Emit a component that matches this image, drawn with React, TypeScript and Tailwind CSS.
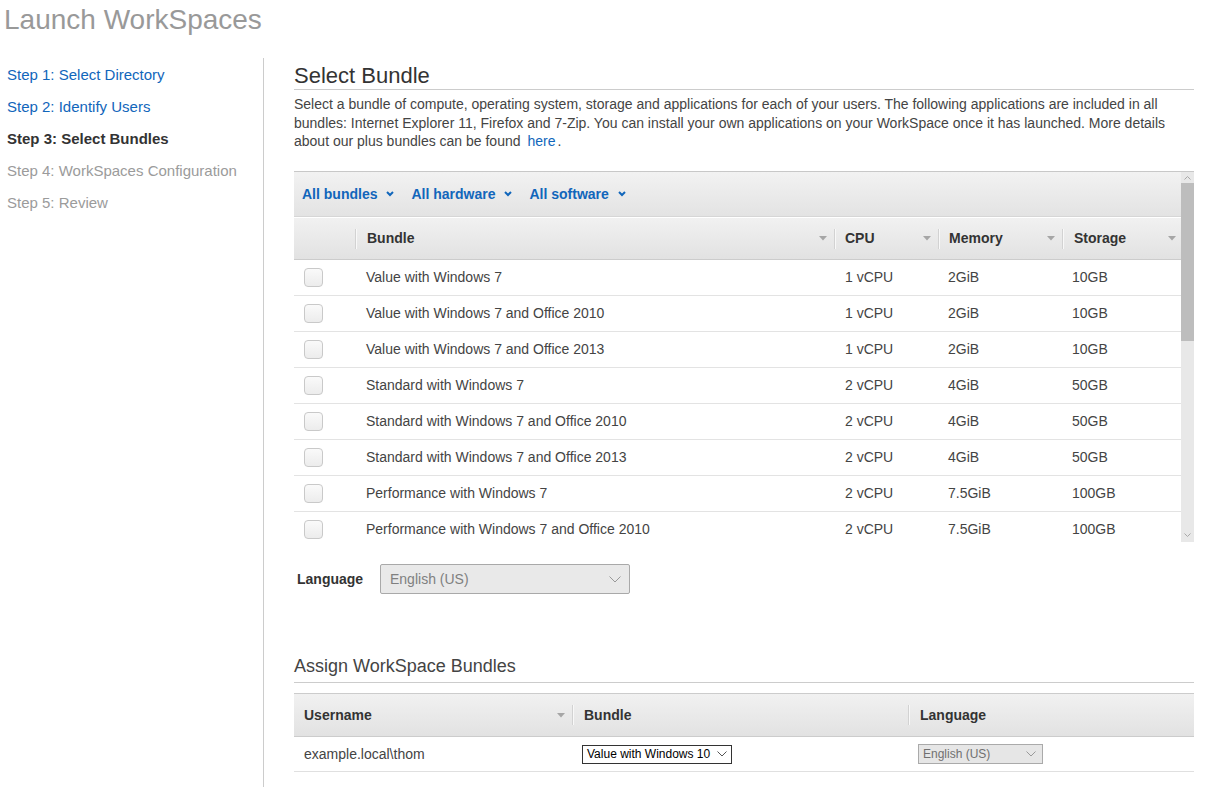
import React from "react"

const bundles = [
    { name: "Value with Windows 7", cpu: "1 vCPU", mem: "2GiB", storage: "10GB" },
    { name: "Value with Windows 7 and Office 2010", cpu: "1 vCPU", mem: "2GiB", storage: "10GB" },
    { name: "Value with Windows 7 and Office 2013", cpu: "1 vCPU", mem: "2GiB", storage: "10GB" },
    { name: "Standard with Windows 7", cpu: "2 vCPU", mem: "4GiB", storage: "50GB" },
    { name: "Standard with Windows 7 and Office 2010", cpu: "2 vCPU", mem: "4GiB", storage: "50GB" },
    { name: "Standard with Windows 7 and Office 2013", cpu: "2 vCPU", mem: "4GiB", storage: "50GB" },
    { name: "Performance with Windows 7", cpu: "2 vCPU", mem: "7.5GiB", storage: "100GB" },
    { name: "Performance with Windows 7 and Office 2010", cpu: "2 vCPU", mem: "7.5GiB", storage: "100GB" },
]

function Caret({ className = "" }: { className?: string }) {
    return (
        <svg className={className} width="8" height="5" viewBox="0 0 8 5">
            <polygon points="0,0 8,0 4,4.5" fill="#a6a6a6" />
        </svg>
    )
}

function BlueChevron() {
    return (
        <svg className="ml-[9px] mr-[17px]" width="8" height="6" viewBox="0 0 8 6">
            <polyline points="1,1 4,4 7,1" fill="none" stroke="#1166bb" strokeWidth="2" />
        </svg>
    )
}

function ThinChevron({ className = "", w = 12, h = 7, color = "#999" }: { className?: string, w?: number, h?: number, color?: string }) {
    return (
        <svg className={className} width={w} height={h} viewBox={`0 0 ${w} ${h}`}>
            <polyline points={`0.5,0.5 ${w / 2},${h - 1} ${w - 0.5},0.5`} fill="none" stroke={color} strokeWidth="1" />
        </svg>
    )
}

function Sep() {
    return <div className="h-[20px] w-px bg-[#d2d2d2] border-r border-[#f8f8f8] box-content" />
}

export default function App() {
    return (
        <div className="w-[1205px] h-[787px] overflow-hidden bg-white font-['Liberation_Sans',Arial,sans-serif]">
            <h1 className="pl-[4px] pt-[4px] text-[28px] leading-[32px] text-[#999]">Launch WorkSpaces</h1>

            <div className="mt-[22px] flex h-[729px]">
                {/* steps */}
                <div className="w-[264px] shrink-0 border-r border-[#cccccc] pt-[1px] pl-[7px] text-[15px] leading-[32px]">
                    <div className="text-[#1166bb]">Step 1: Select Directory</div>
                    <div className="text-[#1166bb]">Step 2: Identify Users</div>
                    <div className="font-bold text-[#333]">Step 3: Select Bundles</div>
                    <div className="text-[#9b9b9b]">Step 4: WorkSpaces Configuration</div>
                    <div className="text-[#9b9b9b]">Step 5: Review</div>
                </div>

                <div className="pl-[30px] w-[930px]">
                    <h2 className="mt-[4px] text-[22px] leading-[27px] text-[#333] border-b border-[#cccccc]">Select Bundle</h2>
                    <p className="mt-[5px] text-[14px] leading-[18.5px] text-[#444]">
                        Select a bundle of compute, operating system, storage and applications for each of your users. The following applications are included in all bundles: Internet Explorer 11, Firefox and 7-Zip. You can install your own applications on your WorkSpace once it has launched. More details about our plus bundles can be found <a className="ml-[3px] mr-[2px] text-[#1166bb]">here</a>.
                    </p>

                    {/* bundle table */}
                    <div className="mt-[20.5px] border-t border-[#c8c8c8] flex h-[371px]">
                        <div className="w-[887px] overflow-hidden text-[14px]">
                            <div className="h-[45px] flex items-center pl-[8px] bg-linear-to-b from-[#f2f2f2] to-[#e3e3e3] border-b border-[#d6d6d6] font-bold text-[#1166bb]">
                                <span>All bundles</span><BlueChevron />
                                <span>All hardware</span><BlueChevron />
                                <span>All software</span><BlueChevron />
                            </div>
                            <div className="h-[43px] flex items-stretch bg-linear-to-b from-[#f1f1f1] to-[#e2e2e2] border-t border-white border-b border-b-[#cccccc] font-bold text-[#333]">
                                <div className="w-[61px]" />
                                <div className="w-[479px] flex items-center"><Sep /><span className="ml-[10px]">Bundle</span><Caret className="ml-auto mr-[7px]" /></div>
                                <div className="w-[104px] flex items-center"><Sep /><span className="ml-[9px]">CPU</span><Caret className="ml-auto mr-[7px]" /></div>
                                <div className="w-[124px] flex items-center"><Sep /><span className="ml-[9px]">Memory</span><Caret className="ml-auto mr-[7px]" /></div>
                                <div className="w-[119px] flex items-center"><Sep /><span className="ml-[10px]">Storage</span><Caret className="ml-auto mr-[5px]" /></div>
                            </div>
                            {bundles.map((b) => (
                                <div key={b.name} className="h-[36px] shrink-0 flex items-center border-b border-[#e3e3e3] text-[#444]">
                                    <div className="w-[61px] pl-[10px]">
                                        <div className="w-[19px] h-[19px] rounded-[4px] border border-[#c9c9c9] bg-linear-to-b from-[#fafafa] to-[#ececec]" />
                                    </div>
                                    <div className="w-[479px] pl-[11px]">{b.name}</div>
                                    <div className="w-[104px] pl-[11px]">{b.cpu}</div>
                                    <div className="w-[124px] pl-[10px]">{b.mem}</div>
                                    <div className="w-[119px] pl-[10px]">{b.storage}</div>
                                </div>
                            ))}
                        </div>
                        <div className="w-[13px] bg-[#e8e8e8] flex flex-col items-center">
                            <div className="h-[11px] flex items-center justify-center">
                                <svg width="7" height="4" viewBox="0 0 7 4"><polyline points="0.5,3.5 3.5,0.5 6.5,3.5" fill="none" stroke="#a8a8a8" strokeWidth="1" /></svg>
                            </div>
                            <div className="w-full h-[158px] bg-[#bdbdbd]" />
                            <div className="flex-1" />
                            <div className="h-[14px] flex items-center justify-center">
                                <svg width="7" height="4" viewBox="0 0 7 4"><polyline points="0.5,0.5 3.5,3.5 6.5,0.5" fill="none" stroke="#a8a8a8" strokeWidth="1" /></svg>
                            </div>
                        </div>
                    </div>

                    <div className="mt-[22px] flex items-center">
                        <span className="ml-[3px] w-[83px] text-[14px] font-bold text-[#333]">Language</span>
                        <div className="w-[250px] h-[30px] flex items-center justify-between pl-[9px] pr-[8px] rounded-[2px] border border-[#a9a9a9] bg-[#e9e9e9] text-[14px] text-[#808080]">
                            <span>English (US)</span>
                            <ThinChevron />
                        </div>
                    </div>

                    <h2 className="mt-[61px] pb-[5px] text-[18px] leading-[22px] text-[#444] border-b border-[#cccccc]">Assign WorkSpace Bundles</h2>

                    <div className="mt-[10px] border-t border-[#cccccc] text-[14px]">
                        <div className="h-[43px] flex items-stretch bg-linear-to-b from-[#f1f1f1] to-[#e2e2e2] border-b border-[#cccccc] font-bold text-[#333]">
                            <div className="w-[278px] flex items-center pl-[10px]"><span>Username</span><Caret className="ml-auto mr-[7px]" /></div>
                            <div className="w-[336px] flex items-center"><Sep /><span className="ml-[10px]">Bundle</span></div>
                            <div className="w-[286px] flex items-center"><Sep /><span className="ml-[10px]">Language</span></div>
                        </div>
                        <div className="h-[35px] flex items-center border-b border-[#e0e0e0] text-[#444]">
                            <div className="w-[278px] pl-[10px]">example.local\thom</div>
                            <div className="w-[336px] pl-[10px]">
                                <div className="w-[150px] h-[19px] flex items-center justify-between pl-[4px] pr-[4px] border border-[#333] bg-white text-[12px] text-black">
                                    <span>Value with Windows 10</span>
                                    <ThinChevron w={10} h={6} color="#555" />
                                </div>
                            </div>
                            <div className="w-[286px] pl-[10px]">
                                <div className="w-[125px] h-[20px] flex items-center justify-between pl-[4px] pr-[6px] border border-[#aaaaaa] bg-[#e6e6e6] text-[12px] text-[#707070]">
                                    <span>English (US)</span>
                                    <ThinChevron w={10} h={6} color="#999" />
                                </div>
                            </div>
                        </div>
                    </div>
                </div>
            </div>
        </div>
    )
}
